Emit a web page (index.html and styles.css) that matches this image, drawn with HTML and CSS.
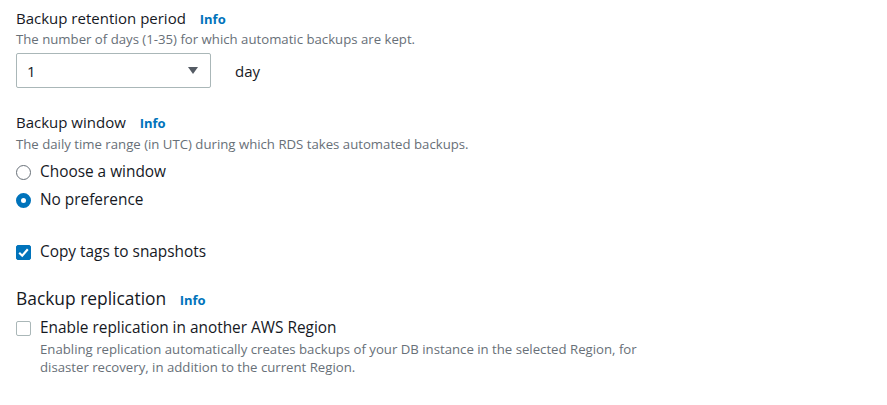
FILE: index.html
```html
<!DOCTYPE html>
<html>
<head>
<meta charset="utf-8">
<link rel="stylesheet" href="styles.css">
</head>
<body>
<div class="form">
  <div class="field">
    <div class="label">Backup retention period <a class="info">Info</a></div>
    <div class="desc">The number of days (1-35) for which automatic backups are kept.</div>
    <div class="select-row">
      <div class="select">
        <span>1</span>
        <svg class="caret" width="10" height="7" viewBox="0 0 10 7"><path d="M0 0H10L5 7Z" fill="#545b64"/></svg>
      </div>
      <span class="unit">day</span>
    </div>
  </div>

  <div class="field f2">
    <div class="label">Backup window <a class="info">Info</a></div>
    <div class="desc">The daily time range (in UTC) during which RDS takes automated backups.</div>
    <div class="radios">
      <div class="opt"><span class="radio"></span>Choose a window</div>
      <div class="opt"><span class="radio on"></span>No preference</div>
    </div>
  </div>

  <div class="opt check-row"><span class="cb on"><svg width="14" height="14" viewBox="0 0 14 14"><path d="M3 7.2L5.8 10L11 4" fill="none" stroke="#fff" stroke-width="2"/></svg></span>Copy tags to snapshots</div>

  <div class="field f3">
    <div class="label big">Backup replication <a class="info">Info</a></div>
    <div class="opt"><span class="cb"></span>Enable replication in another AWS Region</div>
    <div class="desc indent">Enabling replication automatically creates backups of your DB instance in the selected Region, for disaster recovery, in addition to the current Region.</div>
  </div>
</div>
</body>
</html>
```
FILE: styles.css
```css
body {
  margin: 0;
  font-family: "Open Sans", "Noto Sans", sans-serif;
  color: #16191f;
  background: #fff;
}
.form {
  padding: 7px 16px 0 16px;
  display: flex;
  flex-direction: column;
}
.label {
  font-size: 15px;
  line-height: 22px;
}
.label.big {
  font-size: 17.4px;
  line-height: 24px;
}
.info {
  color: #0073bb;
  font-weight: 700;
  font-size: 13px;
  margin-left: 10px;
}
.big .info { margin-left: 9px; }
.desc {
  font-size: 13.2px;
  line-height: 16px;
  color: #687078;
  margin-top: 1px;
}
.select-row {
  display: flex;
  align-items: center;
  margin-top: 6px;
}
.select {
  width: 195px;
  height: 35px;
  box-sizing: border-box;
  border: 1px solid #aab7b8;
  border-radius: 2px;
  display: flex;
  align-items: center;
  justify-content: space-between;
  padding: 0 12px 0 10px;
  font-size: 15px;
}
.unit {
  font-size: 15px;
  margin-left: 24px;
}
.f2 { margin-top: 23px; }
.f2 .desc { margin-top: 2px; }
.radios {
  display: flex;
  flex-direction: column;
  gap: 6px;
  margin-top: 9px;
}
.opt {
  display: flex;
  align-items: center;
  font-size: 15.4px;
  line-height: 22px;
}
.radio {
  width: 15px;
  height: 15px;
  box-sizing: border-box;
  border: 1.5px solid #687078;
  border-radius: 50%;
  margin-right: 9px;
}
.radio.on {
  border: 5px solid #0073bb;
}
.check-row { margin-top: 30px; }
.cb {
  width: 15px;
  height: 15px;
  box-sizing: border-box;
  border: 1px solid #aab7b8;
  border-radius: 2px;
  margin-right: 9px;
  display: flex;
}
.cb.on {
  background: #0073bb;
  border-color: #0073bb;
}
.cb.on svg { margin: -1px; width: 15px; height: 15px; }
.f3 { margin-top: 23px; }
.f3 .opt { margin-top: 5px; }
.desc.indent {
  margin-left: 24px;
  line-height: 18px;
  margin-top: 1px;
  max-width: 605px;
}
```
